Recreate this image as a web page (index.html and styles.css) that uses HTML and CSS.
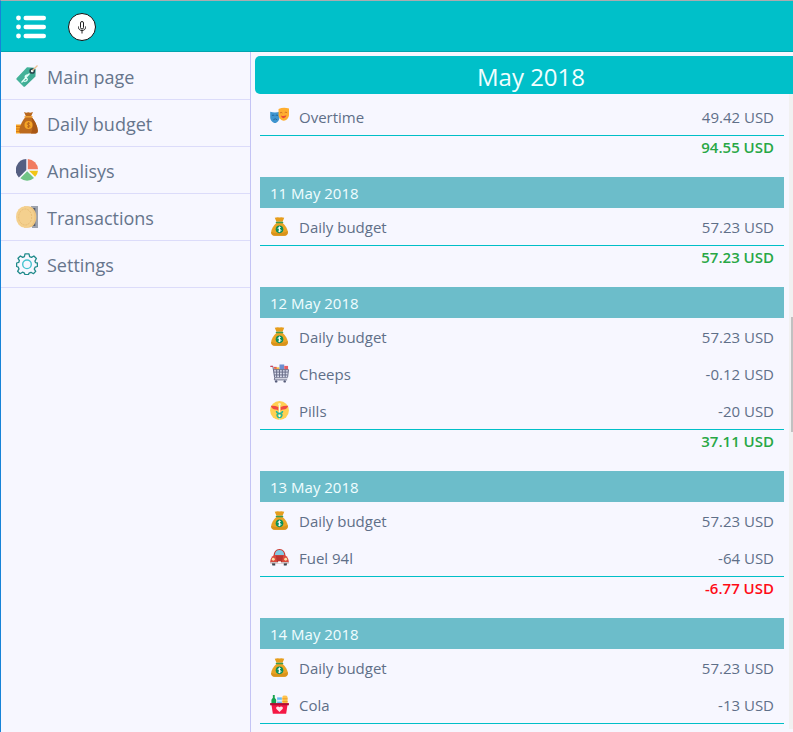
FILE: index.html
```html
<!DOCTYPE html>
<html lang="en">
<head>
<meta charset="utf-8">
<meta name="viewport" content="width=device-width, initial-scale=1">
<title>Transactions</title>
<link rel="stylesheet" href="styles.css">
</head>
<body>
<svg class="sprite" aria-hidden="true">
  <symbol id="bag" viewBox="0 0 20 20">
    <path d="M5 .8Q7.500 0 10 .5Q12.500 0 15 .8L13.200 5H6.800z" fill="#e69d1c"/>
    <path d="M7 6h6c3.500 3 5.800 7 5.800 10 0 2.500-1.500 3.700-3.800 3.700H5c-2.300 0-3.800-1.200-3.800-3.700 0-3 2.300-7 5.800-10z" fill="#e9a424"/>
    <path d="M1.300 15.500c2 2 14.500 2 17.400-1 .5 3.500-1 5.200-3.700 5.200H5c-2.500 0-3.900-1.500-3.700-4.200z" fill="#d9931b"/>
    <rect x="6" y="5" width="8" height="1.500" rx=".7" fill="#3b9b50"/>
    <circle cx="10" cy="13" r="4" fill="#0b8f5a"/>
    <path d="M11.500 11.400c-.5-.8-2.900-.8-2.900.5 0 1.400 2.900.8 2.900 2.200 0 1.300-2.400 1.400-3.100.4M10 10v6" fill="none" stroke="#fff" stroke-width="1"/>
  </symbol>
  <symbol id="masks" viewBox="0 0 20 20">
    <path d="M.2 5q5 1.700 9.800 0v6c0 3-2.500 5.800-4.700 5.800S.2 14 .2 11z" fill="#3f95cf"/>
    <path d="M2 9q1.200-1 2.500 0M6 9q1.200-1 2.500 0M3.500 13.500q2-2.200 4 0" fill="none" stroke="#20649c" stroke-width="1"/>
    <path d="M9 2q5.500-2 11-.3V8.500c0 3-3 6-5.500 6S9 11.500 9 8.500z" fill="#ffae2f"/>
    <path d="M10.500 6.300q1.200-1.200 2.500 0M15.500 6q1.200-1.200 2.500 0" fill="none" stroke="#d06e22" stroke-width="1"/>
    <path d="M11.500 9q2.800 1.200 5.800-.2-.5 3-2.900 3T11.500 9z" fill="#e74b38"/>
  </symbol>
  <symbol id="cart" viewBox="0 0 20 20">
    <path d="M5 3.500h5V6H5z" fill="#f5c242"/><path d="M4 3h3v2H4z" fill="#e85c51"/>
    <path d="M10 .5h5V6h-5z" fill="#6d8fd0"/><path d="M15 2h4v4h-4z" fill="#e85c61"/>
    <path d="M3 6h16l-1 8H4z" fill="#d9dcec"/>
    <path d="M.5 2.500H3L5 14.500h13.500M3.500 6h16L18.500 14M4 8.500h15M4.500 11.500h14M7 6v8M10 6v8M13 6v8M16 6v8M5 14.500l-.5 2.200H18" fill="none" stroke="#656985" stroke-width="1"/>
    <path d="M.5 2.500H3" stroke="#dd4054" stroke-width="1.200"/>
    <circle cx="6.500" cy="18.300" r="1.300" fill="#555b79"/><circle cx="15.500" cy="18.300" r="1.300" fill="#555b79"/>
  </symbol>
  <symbol id="pills" viewBox="0 0 20 20">
    <circle cx="10" cy="10" r="9.900" fill="#ffd052"/>
    <path d="M.8 5q4.500-.3 8 1.300v4Q7.500 8.800 5.800 9 2 8.800.8 5zM19.200 5q-4.500-.3-8 1.300v4q1.300-1.500 3-1.300 3.800-.2 5-4z" fill="#f04a42"/>
    <path d="M10 4v15.500" stroke="#f2fff4" stroke-width="1.400"/>
    <path d="M6.800 10.500q0 2.200 3.200 2.700t2.500 2.300-2.500 2.300M13.200 10.500q0 2.200-3.200 2.700t-2.500 2.300 2.500 2.300" fill="none" stroke="#20b59b" stroke-width="1.500"/>
    <circle cx="10" cy="3.500" r="1.400" fill="#fff0ba"/>
  </symbol>
  <symbol id="car" viewBox="0 0 20 20">
    <path d="M1.500 14h4v4.500h-3zM14.500 14h4l-1 4.500h-3z" fill="#36454f"/>
    <path d="M3.500 9Q4 1 10 1t6.500 8z" fill="#c83b32"/>
    <path d="M5 7.500Q5.500 2.200 10 2.200t5 5.300z" fill="#82cbe3"/>
    <path d="M.3 14Q.5 9.500 4.500 7.500h11q4 2 4.200 6.500v2H.3z" fill="#d94a3d"/>
    <path d="M6 8h8l-1.500 7h-5z" fill="#b93530"/>
    <circle cx="3.500" cy="11.800" r="1.500" fill="#ffe0a2"/><circle cx="16.500" cy="11.800" r="1.500" fill="#ffe0a2"/>
    <path d="M.3 15.500h19.400" stroke="#c4ced3" stroke-width="1.300"/><path d="M8.500 14h3v2h-3z" fill="#fff"/>
  </symbol>
  <symbol id="basket" viewBox="0 0 20 20">
    <path d="M3 0h2v3l1.500 2v5H1.500V5L3 3z" fill="#16a34e"/>
    <path d="M7.500 2.500h5V10h-5z" fill="#65bdf4"/><path d="M7.500 5h5v2h-5z" fill="#d9f1ff"/>
    <path d="M13 2q0-1.500 2.500-1.500T18.500 2v8H13z" fill="#ffc34d"/><path d="M13 4h5.500M13 7h5.500" stroke="#ec9d29"/>
    <path d="M1.500 10h17L17 19.700H3z" fill="#f51845"/><path d="M.1 8.500h19.800v2.300H.1z" fill="#b20d34"/>
    <path d="M10 18l-3.200-3.200c-1.500-2 1.700-3.900 3.200-1.800 1.500-2.100 4.700-.2 3.200 1.800z" fill="#ffe4e8"/>
  </symbol>
  <symbol id="tag" viewBox="0 0 22 22">
    <path d="M.8 13L11 2.300l7.500.4 1.200 1.500-.3 7.300L9 21.500q-1 .6-1.800-.3L.8 14.800q-.9-.9 0-1.800z" fill="#43b299"/>
    <path d="M18.500 3.800l1.200.4-.3 7.300L9 21.500l-1.200.1z" fill="#319581" opacity=".25"/>
    <circle cx="16.200" cy="6" r="2.100" fill="#f1faf7" stroke="#27454c" stroke-width="1.500"/>
    <path d="M16.500 5.500L21.500.5" stroke="#efc091" stroke-width="1.300"/>
    <path d="M5.500 17.500l8-9M12.500 10.500c-1.300-1.400-4 .2-3.200 1.900.6 1.500 2.300.6 2 2.300-.3 1.700-3.300 2.300-4.600.4" fill="none" stroke="#e9fffa" stroke-width="1.200"/>
  </symbol>
  <symbol id="sack" viewBox="0 0 22 22">
    <path d="M0 12.500h5v9H0z" fill="#f6a526"/><path d="M0 14.500h5M0 17h5M0 19.500h5" stroke="#d77c17"/>
    <path d="M8 0l2.200.8L12.300.3l2 .5L17 0l-2 4.500h-5z" fill="#b8671d"/>
    <path d="M9.500 5h6q5.500 6 6.300 13.500.2 3-2.500 3H5.500q-2.700 0-2.300-3Q4.500 10.500 9.500 5z" fill="#bd6b1e"/>
    <path d="M15.500 5q5.500 6 6.300 13.500.2 3-2.500 3H15q3-7 .5-16.500z" fill="#a95714"/>
    <path d="M8.500 4.800h8" stroke="#f0a033" stroke-width="1.500"/>
    <circle cx="12.500" cy="13" r="4" fill="#f6a526"/>
    <path d="M14 11.500c-1-1-3-.5-3 .5 0 1.300 3 .8 3 2.200 0 1-2 1.400-3 .3M12.500 10v6" fill="none" stroke="#bd6b1e"/>
  </symbol>
  <symbol id="pie" viewBox="0 0 22 22">
    <path d="M10.300 0V11L2.900 18.400A10.900 10.900 0 0 1 10.300 0z" fill="#555f82"/>
    <path d="M11.800 0A10.700 10.700 0 0 1 22 10.300H11.800z" fill="#f17b60"/>
    <path d="M13 11.800h9a10 10 0 0 1-2.900 6z" fill="#f2c515"/>
    <path d="M11.200 12.300l6.800 6.800a10.800 10.800 0 0 1-13.700.2z" fill="#70c486"/>
  </symbol>
  <symbol id="coin" viewBox="0 0 22 22">
    <path d="M15 0h7v22h-6z" fill="#9da2ad"/><path d="M15.500 2h3.800v18h-3.800z" fill="#535a6b"/>
    <path d="M8 .2h4c5 0 8.300 4.800 8.300 10.800S17 21.800 12 21.800H8z" fill="#efc680"/>
    <ellipse cx="9.200" cy="11" rx="9.200" ry="10.800" fill="#f4d08e"/>
    <ellipse cx="9.200" cy="11" rx="6.500" ry="8" fill="none" stroke="#e8bd76" stroke-dasharray="2 1"/>
  </symbol>
  <symbol id="gear" viewBox="0 0 22 22">
    <path d="M9 .8h4l.6 2.800 1.900.8L17.900 3l2.500 2.500-1.500 2.600.6 1.500 1.900.4v3.500l-2.300.7-.8 1.900 1.400 2.300-2.300 2.300-2.400-1.400-1.900.8-.6 1.500H9l-.8-1.700-1.700-.7-2.400 1.500-2.500-2.400L3 15.900l-.7-1.700-1.700-.7V10l2.100-.6.7-1.800L2 5.300 4.400 3l2.300 1.400 1.700-.8z" fill="none" stroke="#218b8b" stroke-width="1.300" stroke-linejoin="round"/>
    <circle cx="11" cy="11.300" r="4.300" fill="none" stroke="#45c3cf" stroke-width="1.400"/>
  </symbol>
</svg>
<div class="app">
  <header class="topbar">
    <button class="menu-button" type="button" aria-label="Menu">
      <svg width="30" height="24" viewBox="0 0 30 24"><g fill="#fff"><circle cx="2.500" cy="3" r="2.400"/><circle cx="2.500" cy="12" r="2.400"/><circle cx="2.500" cy="21" r="2.400"/><rect x="7.500" y=".8" width="22.500" height="4.500" rx="2.200"/><rect x="7.500" y="9.800" width="22.500" height="4.500" rx="2.200"/><rect x="7.500" y="18.800" width="22.500" height="4.500" rx="2.200"/></g></svg>
    </button>
    <button class="mic-button" type="button" aria-label="Voice input">
      <svg width="12" height="14" viewBox="0 0 12 14" fill="none" stroke="#222"><rect x="4.500" y="1.500" width="3" height="7.500" rx="1.500"/><path d="M2.500 6.500v1c0 4 7 4 7 0v-1M6 10.500v3"/></svg>
    </button>
  </header>
  <div class="body">
    <nav class="sidebar">
      <a class="nav-link" href="#main"><svg class="nav-icon"><use href="#tag"/></svg><span>Main page</span></a>
      <a class="nav-link" href="#budget"><svg class="nav-icon"><use href="#sack"/></svg><span>Daily budget</span></a>
      <a class="nav-link" href="#analysis"><svg class="nav-icon"><use href="#pie"/></svg><span>Analisys</span></a>
      <a class="nav-link" href="#transactions"><svg class="nav-icon"><use href="#coin"/></svg><span>Transactions</span></a>
      <a class="nav-link" href="#settings"><svg class="nav-icon"><use href="#gear"/></svg><span>Settings</span></a>
    </nav>
    <main class="content">
      <h1 class="month">May 2018</h1>
      <div class="scroller">
        <div class="days">
          <section class="day">
            <div class="entry"><svg class="icon"><use href="#masks"/></svg><span class="name">Overtime</span><span>49.42 USD</span></div>
            <div class="total">94.55 USD</div>
          </section>
          <section class="day">
            <h2 class="date">11 May 2018</h2>
            <div class="entry"><svg class="icon"><use href="#bag"/></svg><span class="name">Daily budget</span><span>57.23 USD</span></div>
            <div class="total">57.23 USD</div>
          </section>
          <section class="day">
            <h2 class="date">12 May 2018</h2>
            <div class="entry"><svg class="icon"><use href="#bag"/></svg><span class="name">Daily budget</span><span>57.23 USD</span></div>
            <div class="entry"><svg class="icon"><use href="#cart"/></svg><span class="name">Cheeps</span><span>-0.12 USD</span></div>
            <div class="entry"><svg class="icon"><use href="#pills"/></svg><span class="name">Pills</span><span>-20 USD</span></div>
            <div class="total">37.11 USD</div>
          </section>
          <section class="day">
            <h2 class="date">13 May 2018</h2>
            <div class="entry"><svg class="icon"><use href="#bag"/></svg><span class="name">Daily budget</span><span>57.23 USD</span></div>
            <div class="entry"><svg class="icon"><use href="#car"/></svg><span class="name">Fuel 94l</span><span>-64 USD</span></div>
            <div class="total negative">-6.77 USD</div>
          </section>
          <section class="day">
            <h2 class="date">14 May 2018</h2>
            <div class="entry"><svg class="icon"><use href="#bag"/></svg><span class="name">Daily budget</span><span>57.23 USD</span></div>
            <div class="entry"><svg class="icon"><use href="#basket"/></svg><span class="name">Cola</span><span>-13 USD</span></div>
            <div class="total"></div>
          </section>
        </div>
        <div class="track"><div class="thumb"></div></div>
      </div>
    </main>
  </div>
</div>
</body>
</html>
```
FILE: styles.css
```css
* { box-sizing: border-box; }

body {
  margin: 0;
  overflow: hidden;
  background: #f7f7ff;
  color: #5f6f88;
  font-family: "Open Sans", "Noto Sans", sans-serif;
  font-size: 15px;
}

.sprite {
  position: absolute;
  width: 0;
  height: 0;
}

.app {
  display: flex;
  flex-direction: column;
  height: 100vh;
  border-top: 1px solid #aaabb0;
  border-left: 1px solid #1683d8;
}

.topbar {
  display: flex;
  flex: none;
  align-items: center;
  gap: 22px;
  height: 51px;
  padding: 1px 15px 0;
  background: #00c0c9;
  border-bottom: 1px solid #00a5ae;
}

button {
  display: flex;
  align-items: center;
  justify-content: center;
  padding: 0;
  border: 0;
  background: none;
}

.mic-button {
  width: 28px;
  height: 28px;
  border: 1px solid #111;
  border-radius: 50%;
  background: #fff;
}

.body {
  display: flex;
  flex: 1;
  min-height: 0;
}

.sidebar {
  flex: none;
  width: 250px;
  padding-top: 1px;
  border-right: 1px solid #c4c4f5;
}

.nav-link {
  display: flex;
  align-items: center;
  gap: 9px;
  height: 47px;
  padding: 0 14px;
  border-bottom: 1px solid #dcdcfa;
  color: #66758c;
  font-size: 18px;
  text-decoration: none;
}

.nav-link span { padding-top: 2px; }

.nav-icon {
  width: 22px;
  height: 22px;
  margin-left: 1px;
}

.content {
  display: flex;
  flex: 1;
  flex-direction: column;
  min-width: 0;
  padding: 4px 0 0 4px;
}

.month {
  flex: none;
  margin: 0;
  padding: 4px 0 0 14px;
  border-radius: 5px 0 0 5px;
  background: #00c0c9;
  color: #f1feff;
  font-size: 24px;
  font-weight: 400;
  line-height: 34px;
  text-align: center;
}

.scroller {
  display: flex;
  flex: 1;
  gap: 5px;
  min-height: 0;
  padding: 0 0 3px 5px;
  overflow: hidden;
}

.days {
  flex: 1;
  padding-top: 4px;
}

.date {
  margin: 0;
  padding: 2px 10px 0;
  background: #6cbdca;
  color: #f1fdff;
  font-size: 15px;
  font-weight: 400;
  line-height: 29px;
}

.entry {
  display: flex;
  align-items: center;
  height: 37px;
  padding: 0 10px;
}

.icon {
  width: 19px;
  height: 19px;
}

.name {
  flex: 1;
  margin-left: 10px;
}

.total {
  height: 42px;
  padding: 0 10px;
  border-top: 1px solid #00bfc7;
  color: #28a745;
  font-weight: 600;
  line-height: 22px;
  text-align: right;
}

.negative { color: #ff0b16; }

.track {
  display: flex;
  flex: none;
  flex-direction: column;
  align-items: flex-end;
  width: 4px;
  padding-top: 223px;
  background: #f1f1f1;
}

.thumb {
  width: 2px;
  height: 115px;
  background: #c1c1c1;
}
```
